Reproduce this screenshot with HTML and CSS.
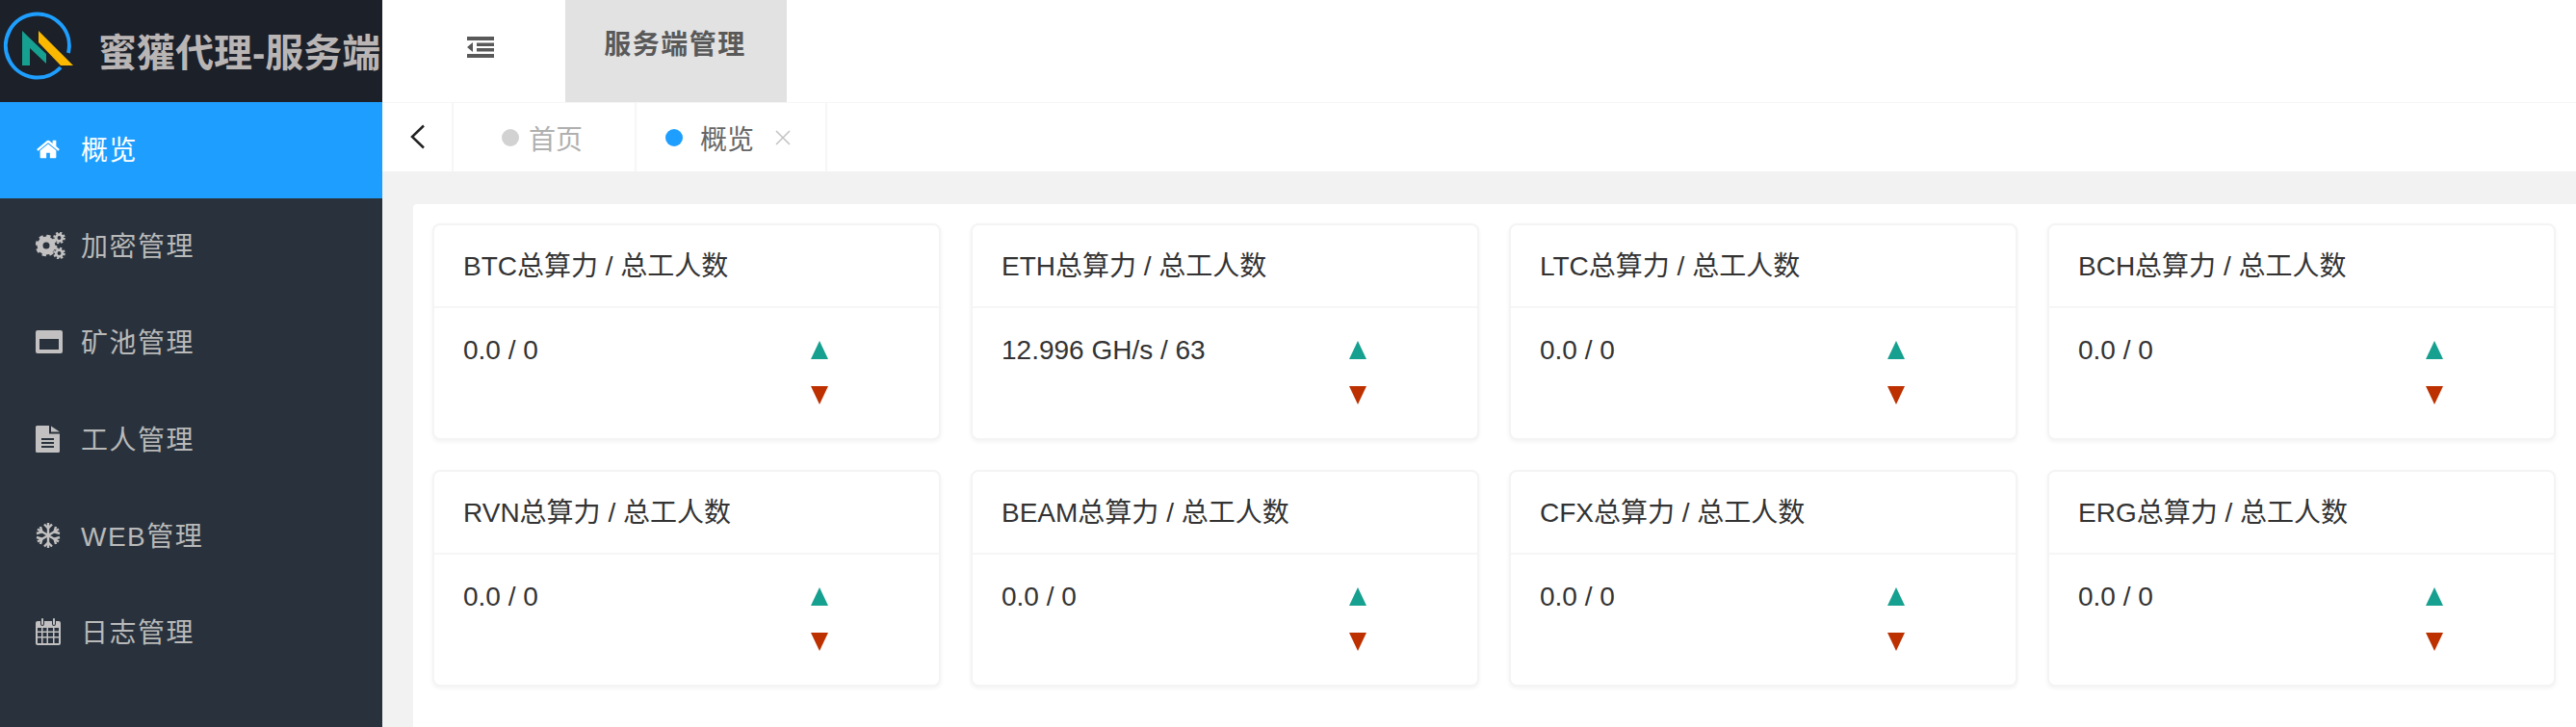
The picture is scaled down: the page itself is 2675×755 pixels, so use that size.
FILE: index.html
```html
<!DOCTYPE html>
<html lang="zh-CN">
<head>
<meta charset="utf-8">
<title>蜜獾代理-服务端</title>
<link rel="stylesheet" href="styles.css">
</head>
<body>
<div class="app">
  <aside class="sidebar">
    <div class="brand">
      <svg class="logo" viewBox="0 0 80 106" aria-hidden="true">
        <path class="logo-ring" d="M63 70A33 33 0 1 1 71 55" />
        <path class="logo-teal" d="M23 32L48 56V66L31 50V68H23Z" />
        <path class="logo-yellow" d="M40 32L76 68H63L40 44Z" />
      </svg>
      <span class="brand-name">蜜獾代理-服务端</span>
    </div>
    <nav class="menu">
      <a class="menu-item is-active"><span class="menu-icon"><svg width="26" height="26" viewBox="0 0 1792 1792"><path d="M1472 992v480q0 26-19 45t-45 19h-384v-384h-256v384h-384q-26 0-45-19t-19-45v-480q0-1 .5-3t.5-3l575-474 575 474q1 2 1 6zm223-69l-62 74q-8 9-21 11h-3q-13 0-21-7l-692-577-692 577q-12 8-24 7-13-2-21-11l-62-74q-8-10-7-23.500t11-21.500l719-599q32-26 76-26t76 26l244 204v-195q0-14 9-23t23-9h192q14 0 23 9t9 23v408l219 182q10 8 11 21.500t-7 23.500z"/></svg></span>概览</a>
      <a class="menu-item"><span class="menu-icon"><svg width="31" height="28" viewBox="0 0 31 28"><g class="gear"><circle cx="11" cy="14" r="6.500" class="gear-body"/><circle cx="11" cy="14" r="9.300" class="gear-teeth"/></g><circle cx="24.500" cy="6" r="3.300" class="gear-small"/><circle cx="24.500" cy="6" r="5.200" class="gear-teeth-small"/><circle cx="24.500" cy="22" r="3.300" class="gear-small"/><circle cx="24.500" cy="22" r="5.200" class="gear-teeth-small"/></svg></span>加密管理</a>
      <a class="menu-item"><span class="menu-icon"><svg width="28" height="24" viewBox="0 0 28 24"><path fill-rule="evenodd" d="M2 0H26A2 2 0 0 1 28 2V22A2 2 0 0 1 26 24H2A2 2 0 0 1 0 22V2A2 2 0 0 1 2 0ZM4 9V20H24V9Z"/></svg></span>矿池管理</a>
      <a class="menu-item"><span class="menu-icon"><svg width="25" height="28" viewBox="0 0 25 28"><path fill-rule="evenodd" d="M1.500 0H14V8.500H25V26.500A1.500 1.500 0 0 1 23.500 28H1.500A1.500 1.500 0 0 1 0 26.500V1.500A1.500 1.500 0 0 1 1.500 0ZM6 13V15H19V13ZM6 17V19H19V17ZM6 21V23H19V21Z"/><path d="M16 0.500L25 6.500H16Z"/></svg></span>工人管理</a>
      <a class="menu-item"><span class="menu-icon"><svg width="26" height="28" viewBox="0 0 26 28"><g class="flake"><path d="M13 1V27M2 7.500L24 20.500M24 7.500L2 20.500"/><path d="M9 2.500L13 6.500L17 2.500M9 25.500L13 21.500L17 25.500M1 12L6.500 10.500L5 5M25 16L19.500 17.500L21 23M25 12L19.500 10.500L21 5M1 16L6.500 17.500L5 23"/></g></svg></span>WEB管理</a>
      <a class="menu-item"><span class="menu-icon"><svg width="26" height="28" viewBox="0 0 26 28"><path fill-rule="evenodd" d="M2 3H5V6A2 2 0 0 0 9 6V3H17V6A2 2 0 0 0 21 6V3H24A2 2 0 0 1 26 5V26A2 2 0 0 1 24 28H2A2 2 0 0 1 0 26V5A2 2 0 0 1 2 3ZM2 10V13.500H6V10ZM7.500 10V13.500H11.500V10ZM13 10V13.500H18V10ZM19.500 10V13.500H24V10ZM2 15V19H6V15ZM7.500 15V19H11.500V15ZM13 15V19H18V15ZM19.500 15V19H24V15ZM2 20.500V26H6V20.500ZM7.500 20.500V26H11.500V20.500ZM13 20.500V26H18V20.500ZM19.500 20.500V26H24V20.500Z"/><rect x="6" y="0" width="2" height="7" rx="1"/><rect x="18" y="0" width="2" height="7" rx="1"/></svg></span>日志管理</a>
    </nav>
  </aside>
  <main class="main">
    <header class="topbar">
      <button class="fold-btn" aria-label="折叠"><svg width="28" height="22" viewBox="0 0 28 22"><path d="M0 0H28V4H0ZM10 6.500H28V10H10ZM10 12H28V15.500H10ZM0 18H28V22H0ZM6 6V16L0 11Z"/></svg></button>
      <div class="top-tab">服务端管理</div>
    </header>
    <div class="tabbar">
      <button class="tab-back" aria-label="返回"><svg width="16" height="26" viewBox="0 0 16 26"><path d="M14 1.500L2 13L14 24.500"/></svg></button>
      <div class="tab tab-home"><span class="tab-dot"></span>首页</div>
      <div class="tab tab-current"><span class="tab-dot"></span>概览<svg class="tab-close" width="16" height="16" viewBox="0 0 16 16"><path d="M1 1L15 15M15 1L1 15"/></svg></div>
    </div>
    <section class="content">
      <div class="panel">
        <article class="card"><h3 class="card-title">BTC总算力 / 总工人数</h3><div class="card-body"><span class="card-value">0.0 / 0</span><span class="arrows"><i class="arrow-up"></i><i class="arrow-down"></i></span></div></article>
        <article class="card"><h3 class="card-title">ETH总算力 / 总工人数</h3><div class="card-body"><span class="card-value">12.996 GH/s / 63</span><span class="arrows"><i class="arrow-up"></i><i class="arrow-down"></i></span></div></article>
        <article class="card"><h3 class="card-title">LTC总算力 / 总工人数</h3><div class="card-body"><span class="card-value">0.0 / 0</span><span class="arrows"><i class="arrow-up"></i><i class="arrow-down"></i></span></div></article>
        <article class="card"><h3 class="card-title">BCH总算力 / 总工人数</h3><div class="card-body"><span class="card-value">0.0 / 0</span><span class="arrows"><i class="arrow-up"></i><i class="arrow-down"></i></span></div></article>
        <article class="card"><h3 class="card-title">RVN总算力 / 总工人数</h3><div class="card-body"><span class="card-value">0.0 / 0</span><span class="arrows"><i class="arrow-up"></i><i class="arrow-down"></i></span></div></article>
        <article class="card"><h3 class="card-title">BEAM总算力 / 总工人数</h3><div class="card-body"><span class="card-value">0.0 / 0</span><span class="arrows"><i class="arrow-up"></i><i class="arrow-down"></i></span></div></article>
        <article class="card"><h3 class="card-title">CFX总算力 / 总工人数</h3><div class="card-body"><span class="card-value">0.0 / 0</span><span class="arrows"><i class="arrow-up"></i><i class="arrow-down"></i></span></div></article>
        <article class="card"><h3 class="card-title">ERG总算力 / 总工人数</h3><div class="card-body"><span class="card-value">0.0 / 0</span><span class="arrows"><i class="arrow-up"></i><i class="arrow-down"></i></span></div></article>
      </div>
    </section>
  </main>
</div>
</body>
</html>
```
FILE: styles.css
```css
* { box-sizing: border-box; }
html, body { margin: 0; height: 755px; overflow: hidden; }
body { font-family: "Liberation Sans", "Noto Sans CJK SC", sans-serif; background: #f2f2f2; color: #333; }
.app { display: flex; height: 755px; }

.sidebar { width: 397px; flex: none; background: #29323c; }
.brand { height: 106px; background: #1b2029; display: flex; align-items: center; white-space: nowrap; }
.logo { width: 80px; height: 106px; flex: none; margin-right: 22px; }
.logo-ring { fill: none; stroke: #1e9fff; stroke-width: 4; }
.logo-teal { fill: #16a08f; }
.logo-yellow { fill: #fbb800; }
.brand-name { font-size: 40px; font-weight: 700; color: #bab5b5; letter-spacing: 0; padding-bottom: 2px; }

.menu { display: flex; flex-direction: column; }
.menu-item { height: 100.3px; display: flex; align-items: center; padding: 0 0 4px 37px; font-size: 28px; letter-spacing: 1.500px; color: #b9b9b9; }
.menu-item.is-active { background: #1e9fff; color: #fff; height: 100px; }
.menu-icon { width: 47px; flex: none; display: flex; align-items: center; margin-top: 2px; }
.menu-icon svg { display: block; fill: #c2c0c0; }
.is-active .menu-icon svg { fill: #fff; }
.gear-body { fill: none; stroke: #c2c0c0; stroke-width: 6; }
.gear-teeth { fill: none; stroke: #c2c0c0; stroke-width: 4; stroke-dasharray: 4 3.300; }
.gear-small { fill: none; stroke: #c2c0c0; stroke-width: 2.800; }
.gear-teeth-small { fill: none; stroke: #c2c0c0; stroke-width: 2.200; stroke-dasharray: 2.200 1.880; }
.flake path { fill: none; stroke: #c2c0c0; stroke-width: 2.400; }

.main { flex: 1; min-width: 0; display: flex; flex-direction: column; }
.topbar { height: 106px; flex: none; background: #fff; display: flex; }
.fold-btn { width: 190px; border: 0; background: none; padding: 0 0 8px 13px; display: flex; align-items: center; justify-content: center; }
.fold-btn svg { fill: #595959; display: block; }
.top-tab { width: 230px; background: #e2e2e2; display: flex; align-items: center; justify-content: center; font-size: 28px; font-weight: 700; letter-spacing: 1.500px; color: #595959; padding: 0 2px 18px 0; }

.tabbar { height: 72px; flex: none; background: #fff; display: flex; border-top: 1.500px solid #f6f6f6; font-size: 28px; }
.tab-back { width: 74px; border: 0; background: none; border-right: 2px solid #f6f6f6; padding: 0 0 2px 2px; display: flex; align-items: center; justify-content: center; }
.tab-back svg { fill: none; stroke: #222; stroke-width: 2.500; display: block; }
.tab { display: flex; align-items: center; border-right: 2px solid #f6f6f6; }
.tab-home { width: 190px; padding-left: 50px; color: #b0b0b0; }
.tab-current { width: 198px; padding-left: 30px; color: #666; }
.tab-dot { width: 18px; height: 18px; border-radius: 50%; background: #d2d2d2; margin-right: 10px; flex: none; }
.tab-current .tab-dot { background: #1e9fff; margin-right: 18px; }
.tab-close { margin-left: 22px; fill: none; stroke: #c2c2c2; stroke-width: 1.500; }

.content { flex: 1; padding: 34px 0 0 32px; min-height: 0; }
.panel { background: #fff; height: 100%; border-radius: 4px 0 0 0; padding: 20px 20px 0 20px; display: grid; grid-template-columns: repeat(4, 528px); grid-auto-rows: 225px; gap: 31px 31px; }
.card { background: #fff; border: 2px solid #f4f4f4; border-radius: 8px; box-shadow: 0 2px 4px rgba(0, 0, 0, .05); }
.card-title { margin: 0; height: 86px; border-bottom: 2px solid #f6f6f6; padding: 0 30px 5px; display: flex; align-items: center; font-size: 28px; font-weight: 400; color: #333; letter-spacing: 0; }
.card-body { display: flex; padding: 25px 30px 0; }
.card-value { font-size: 28px; line-height: 38px; color: #333; flex: 1; }
.arrows { width: 19px; display: flex; flex-direction: column; gap: 28px; margin: 9px 84px 0 0; }
.arrow-up { width: 0; height: 0; border: 9.500px solid transparent; border-top: 0; border-bottom: 19px solid #16a08f; }
.arrow-down { width: 0; height: 0; border: 9.500px solid transparent; border-bottom: 0; border-top: 19px solid #bd3100; }
```
